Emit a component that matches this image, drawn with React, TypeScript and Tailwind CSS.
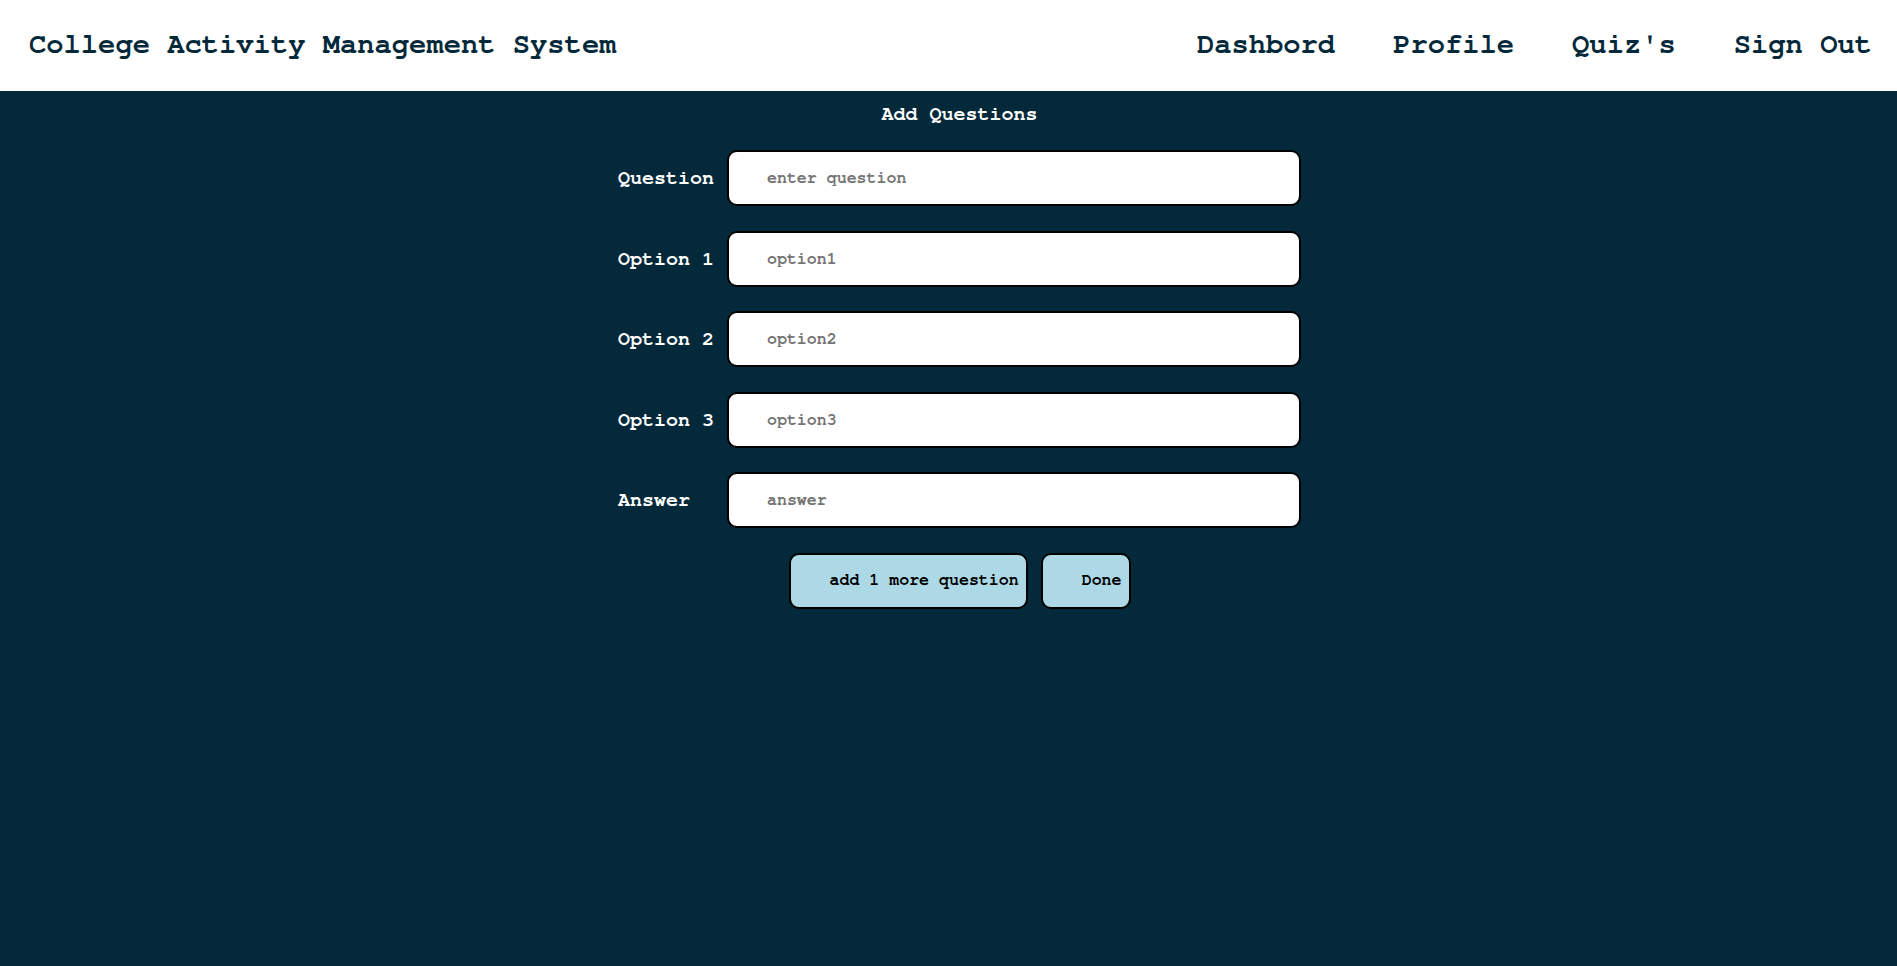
import React from "react";

const mono = { fontFamily: '"Nimbus Mono PS", "Nimbus Mono L", "FreeMono", "Courier", "Liberation Mono", monospace' };

function Row({ label, placeholder }: { label: string; placeholder: string }) {
  return (
    <div className="flex items-center">
      <label className="w-[109px] shrink-0 text-[20px] leading-[24px] font-bold text-white">{label}</label>
      <input
        type="text"
        placeholder={placeholder}
        className="h-[56px] w-[574px] rounded-[10px] border-2 border-black bg-white pl-[38px] pr-2 text-[16.6px] font-bold text-black outline-none placeholder:text-[#757575]"
        style={mono}
      />
    </div>
  );
}

export default function App() {
  return (
    <div className="flex min-h-[966px] flex-col bg-[#04293A]" style={mono}>
      <header className="flex h-[91px] shrink-0 items-center justify-between bg-white pl-[29px] pr-[25px]">
        <h1 className="text-[28.8px] leading-none font-bold text-[#04293A]">College Activity Management System</h1>
        <nav className="flex gap-[58px] text-[28.8px] leading-none font-bold text-[#04293A]">
          <a>Dashbord</a>
          <a>Profile</a>
          <a>Quiz's</a>
          <a>Sign Out</a>
        </nav>
      </header>
      <main className="flex flex-1 flex-col items-center pl-[22px] pt-[11px]">
        <h2 className="text-[20px] leading-[24px] font-bold text-white">Add Questions</h2>
        <div className="mt-[24px] flex flex-col gap-[24.5px]">
          <Row label="Question" placeholder="enter question" />
          <Row label="Option 1" placeholder="option1" />
          <Row label="Option 2" placeholder="option2" />
          <Row label="Option 3" placeholder="option3" />
          <Row label="Answer" placeholder="answer" />
          <div className="flex justify-center gap-[13px]">
            <button
              className="h-[56px] rounded-[10px] border-2 border-black bg-[#ADD8E6] pl-[39px] pr-[7px] text-[16.6px] font-bold text-black"
              style={mono}
            >
              add 1 more question
            </button>
            <button
              className="h-[56px] rounded-[10px] border-2 border-black bg-[#ADD8E6] pl-[39px] pr-[7px] text-[16.6px] font-bold text-black"
              style={mono}
            >
              Done
            </button>
          </div>
        </div>
      </main>
    </div>
  );
}
